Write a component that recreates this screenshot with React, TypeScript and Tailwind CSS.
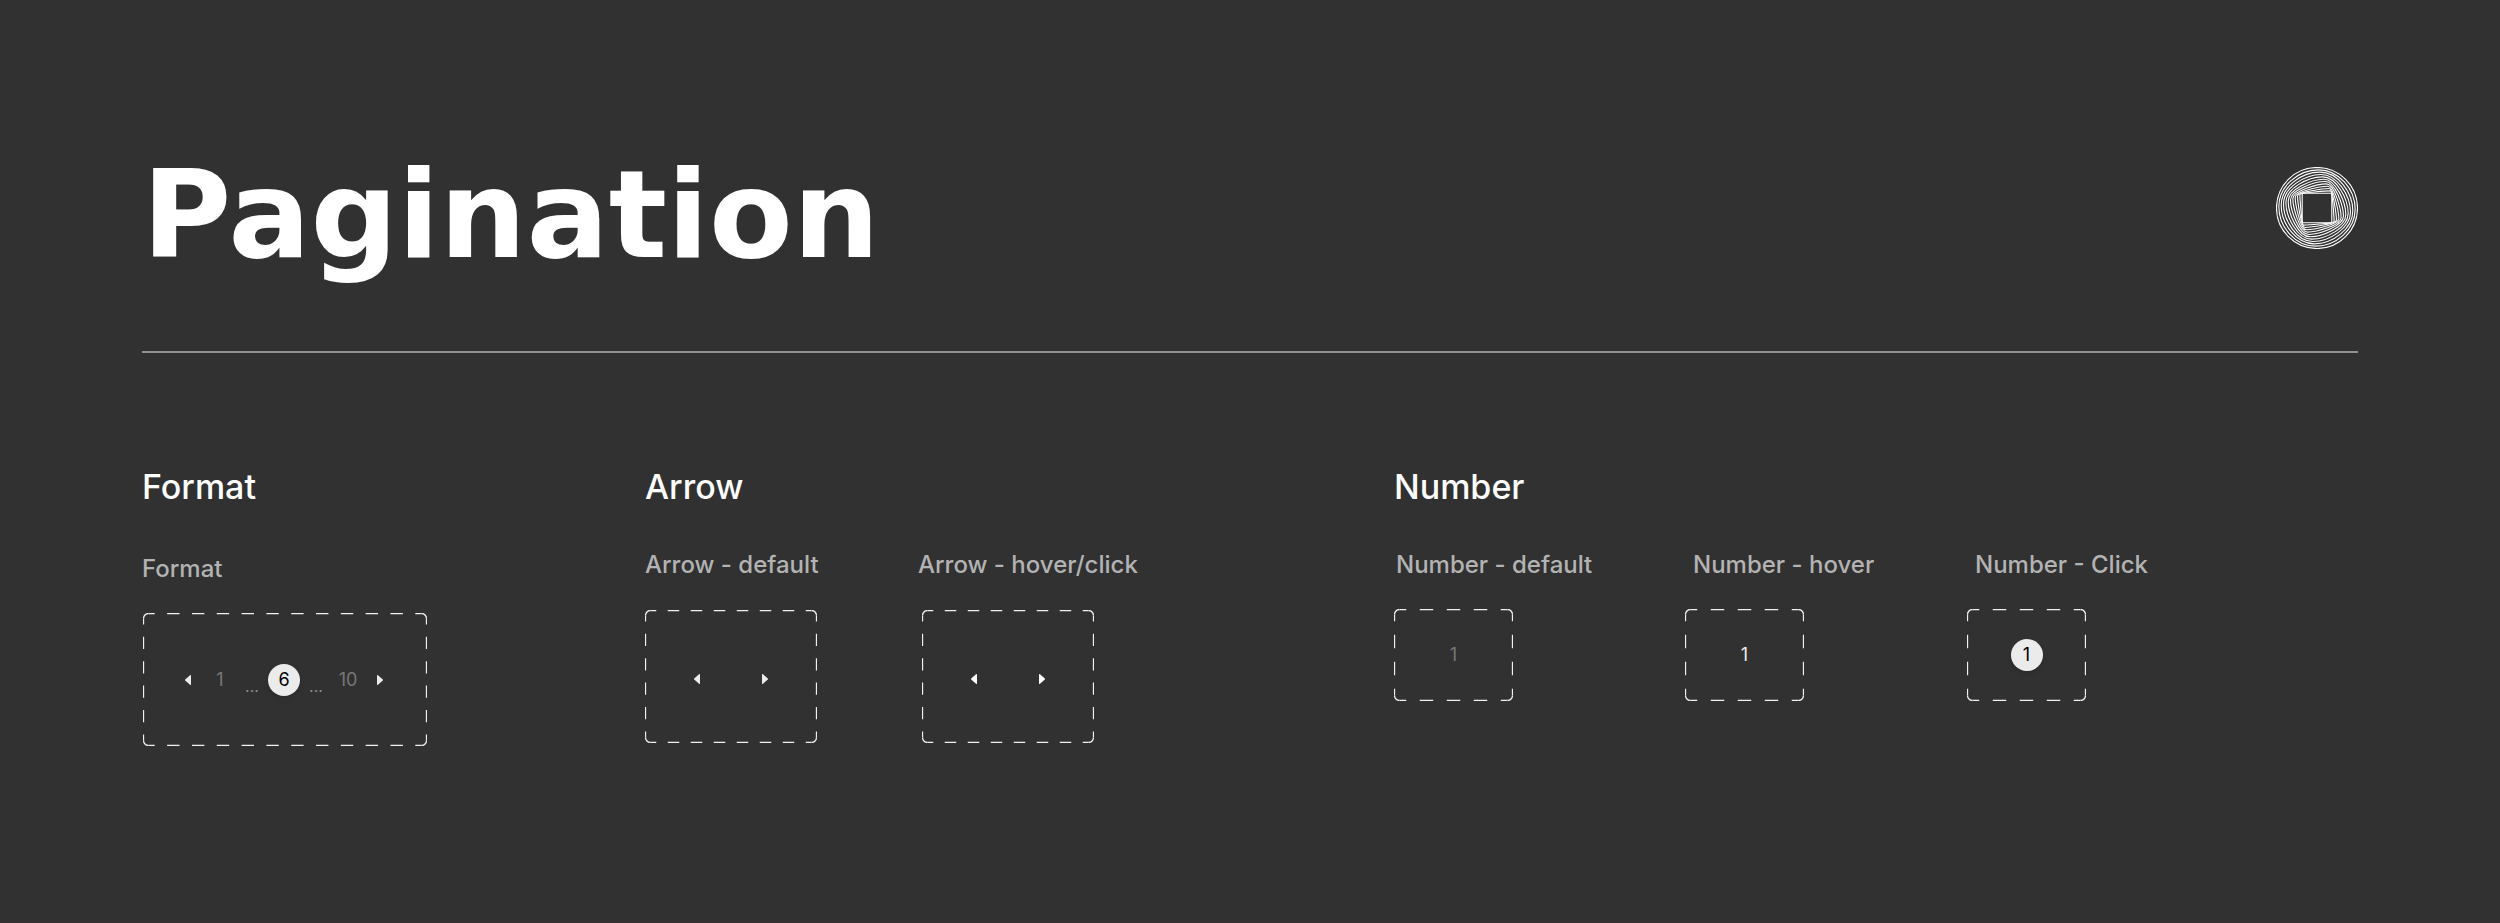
interface FrameProps {
    width: number
    height: number
    cols: number
    rows: number
}

const RADIUS = 5

// Dashed outline with solid rounded corners
function Frame({ width, height, cols, rows }: FrameProps) {
    const l = 0.5
    const t = 0.5
    const r = width - 0.5
    const b = height - 0.5
    const stepX = (r - l - RADIUS * 2) / cols
    const stepY = (b - t - RADIUS * 2) / rows

    return (
        <svg
            className="absolute inset-0 h-full w-full"
            viewBox={`0 0 ${width} ${height}`}
            fill="none"
            stroke="#f2f2f2"
            strokeWidth="1.3"
            aria-hidden="true"
        >
            <path
                d={`M${l + RADIUS} ${t}H${r - RADIUS}M${l + RADIUS} ${b}H${r - RADIUS}`}
                strokeDasharray={stepX / 2}
                strokeDashoffset={stepX / 4}
            />
            <path
                d={`M${l} ${t + RADIUS}V${b - RADIUS}M${r} ${t + RADIUS}V${b - RADIUS}`}
                strokeDasharray={stepY / 2}
                strokeDashoffset={stepY / 4}
            />
            <path
                d={`M${l} ${t + RADIUS}A5 5 0 0 1 ${l + RADIUS} ${t}M${r - RADIUS} ${t}A5 5 0 0 1 ${r} ${t + RADIUS}M${r} ${b - RADIUS}A5 5 0 0 1 ${r - RADIUS} ${b}M${l + RADIUS} ${b}A5 5 0 0 1 ${l} ${b - RADIUS}`}
            />
        </svg>
    )
}

const SQUARE = 14.8
const CIRCLE = 40.5
const STEPS = 11

// One outline of the blend: t = 0 is the inner square, t = 1 the outer circle
function blend(t: number) {
    const a = SQUARE * (1 - t)
    const b = a + CIRCLE * t
    const k = CIRCLE * 0.5523 * t
    return [
        `M${a} ${-b}`,
        `C${a - k} ${-b} ${-b} ${-a - k} ${-b} ${-a}`,
        `C${-b} ${-a + k} ${-a - k} ${b} ${-a} ${b}`,
        `C${-a + k} ${b} ${b} ${a + k} ${b} ${a}`,
        `C${b} ${a - k} ${a + k} ${-b} ${a} ${-b}Z`,
    ].join("")
}

function Logo() {
    return (
        <svg className="h-[82px] w-[82px]" viewBox="-41 -41 82 82" fill="none" stroke="#fff" strokeWidth="1.1" role="img" aria-label="Logo">
            {Array.from({ length: STEPS + 1 }, (_, i) => (
                <path key={i} d={blend(i / STEPS)} />
            ))}
        </svg>
    )
}

function Arrow({ dir, bright }: { dir: "left" | "right"; bright?: boolean }) {
    return (
        <button
            type="button"
            aria-label={dir === "left" ? "Previous page" : "Next page"}
            className={`flex h-8 w-8 items-center justify-center ${bright ? "text-white" : "text-[#ebebeb]"}`}
        >
            <svg className="h-3 w-2" viewBox="0 0 8 12" fill="currentColor">
                {dir === "left" ? (
                    <path d="M1.2 5.4 6 1.3q1-.7 1 .4v8.6q0 1.1-1 .4L1.2 6.6q-.7-.6 0-1.2Z" />
                ) : (
                    <path d="M6.8 5.4 2 1.3q-1-.7-1 .4v8.6q0 1.1 1 .4l4.8-4.1q.7-.6 0-1.2Z" />
                )}
            </svg>
        </button>
    )
}

const numberStyles = {
    default: "text-[#777777]",
    hover: "text-[#ebebeb]",
    active: "bg-[#ebebeb] text-black shadow-md",
}

function PageNumber({ value, state = "default" }: { value: number; state?: keyof typeof numberStyles }) {
    return (
        <button
            type="button"
            className={`flex h-8 w-8 items-center justify-center rounded-full text-lg ${numberStyles[state]}`}
        >
            {value}
        </button>
    )
}

function Dots() {
    return <span className="flex h-8 w-8 items-end justify-center text-base leading-5 text-[#8a8a8a]">...</span>
}

const heading = "text-[34px] leading-10 font-medium text-white"
const label = "text-2xl font-medium whitespace-nowrap text-[#b3b3b3]"

export default function App() {
    return (
        <main className="min-h-screen border-b border-[#372f31] bg-[#313131] px-[142px] pt-[148px] font-['Inter',sans-serif]">
            <header className="flex items-start justify-between border-b-2 border-[#919191] pb-[69px]">
                <h1 className="font-['DejaVu_Sans',sans-serif] text-[122px] leading-[134px] font-bold text-white">Pagination</h1>
                <div className="pt-[19px]">
                    <Logo />
                </div>
            </header>

            <div className="flex items-start pt-[114px]">
                <section className="w-[503px]">
                    <h2 className={heading}>Format</h2>
                    <h3 className={`${label} pt-[46px]`}>Format</h3>
                    <nav aria-label="Pagination" className="relative mt-7 ml-px flex h-[133px] w-[284px] items-center justify-center pr-0.5">
                        <Frame width={284} height={133} cols={11} rows={5} />
                        <Arrow dir="left" />
                        <PageNumber value={1} />
                        <Dots />
                        <PageNumber value={6} state="active" />
                        <Dots />
                        <PageNumber value={10} />
                        <Arrow dir="right" />
                    </nav>
                </section>

                <section className="w-[749px]">
                    <h2 className={heading}>Arrow</h2>
                    <div className="flex pt-[42px]">
                        <div className="w-[273px]">
                            <h3 className={label}>Arrow - default</h3>
                            <div className="relative mt-[29px] flex h-[133px] w-[172px] items-center justify-center gap-9 pt-1">
                                <Frame width={172} height={133} cols={7} rows={5} />
                                <Arrow dir="left" />
                                <Arrow dir="right" />
                            </div>
                        </div>
                        <div>
                            <h3 className={label}>Arrow - hover/click</h3>
                            <div className="relative mt-[29px] ml-1 flex h-[133px] w-[172px] items-center justify-center gap-9 pt-1">
                                <Frame width={172} height={133} cols={7} rows={5} />
                                <Arrow dir="left" bright />
                                <Arrow dir="right" bright />
                            </div>
                        </div>
                    </div>
                </section>

                <section>
                    <h2 className={heading}>Number</h2>
                    <div className="flex pt-[42px]">
                        <div className="w-[291px]">
                            <h3 className={`${label} pl-0.5`}>Number - default</h3>
                            <div className="relative mt-7 flex h-[92px] w-[119px] items-center justify-center">
                                <Frame width={119} height={92} cols={4} rows={3} />
                                <PageNumber value={1} />
                            </div>
                        </div>
                        <div className="w-[282px]">
                            <h3 className={`${label} pl-2`}>Number - hover</h3>
                            <div className="relative mt-7 flex h-[92px] w-[119px] items-center justify-center">
                                <Frame width={119} height={92} cols={4} rows={3} />
                                <PageNumber value={1} state="hover" />
                            </div>
                        </div>
                        <div>
                            <h3 className={`${label} pl-2`}>Number - Click</h3>
                            <div className="relative mt-7 flex h-[92px] w-[119px] items-center justify-center">
                                <Frame width={119} height={92} cols={4} rows={3} />
                                <PageNumber value={1} state="active" />
                            </div>
                        </div>
                    </div>
                </section>
            </div>
        </main>
    )
}
